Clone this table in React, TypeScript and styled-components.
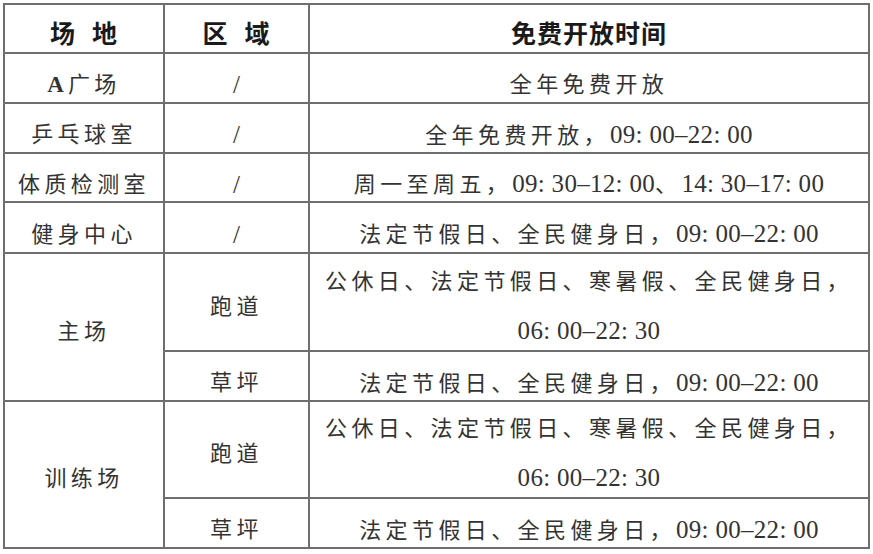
import React from "react";
import styled, { createGlobalStyle } from "styled-components";

const Global = createGlobalStyle`
  html, body {
    margin: 0;
    padding: 0;
    background: #ffffff;
  }
  body {
    font-family: "Liberation Serif", "Noto Sans CJK SC", serif;
  }
`;

const Page = styled.div`
  padding: 3px 0 0 3px;
  background: #ffffff;
`;

const Table = styled.div`
  display: inline-grid;
  grid-template-columns: 158px 143px 558px;
  grid-template-rows: 47px 48px 48px 47px 49px 96px 48px 95px 48px;
  gap: 2px;
  padding: 2px;
  background: #6e6e6e;
`;

const Cell = styled.div<{ $rows?: number }>`
  grid-row: span ${(p) => p.$rows ?? 1};
  background: #ffffff;
  display: flex;
  flex-direction: column;
  align-items: center;
  justify-content: center;
  padding-top: 13px;
  box-sizing: border-box;
  color: #333333;
  font-family: "Liberation Serif", "Noto Sans CJK SC", serif;
  font-size: 22px;
  letter-spacing: 4.4px;
  line-height: 49px;
  white-space: nowrap;
`;

const MultiCell = styled(Cell)`
  padding-top: 8px;
`;

const HeadCell = styled(Cell)`
  padding-top: 8px;
  color: #1a1a1a;
  font-family: "Noto Sans CJK SC", sans-serif;
  font-weight: 700;
  font-size: 25px;
  letter-spacing: 1px;
`;

const Gap = styled.span`
  display: inline-block;
  width: 16px;
`;

const Line = styled.span`
  display: block;
  text-align: center;
`;

const Num = styled.span`
  font-family: "Liberation Serif", serif;
  font-size: 25px;
  letter-spacing: 0.3px;
`;

const Latin = styled.span`
  font-family: "Liberation Serif", serif;
  font-weight: 700;
  font-size: 23px;
  letter-spacing: 4px;
`;

const Slash = styled.span`
  font-family: "Liberation Serif", serif;
  font-size: 25px;
  letter-spacing: 0;
`;

const T = (s: string) => <Num>{s}</Num>;

export default function App() {
  return (
    <>
      <Global />
      <Page>
        <Table>
          <HeadCell>
            <Line>
              场<Gap />地
            </Line>
          </HeadCell>
          <HeadCell>
            <Line>
              区<Gap />域
            </Line>
          </HeadCell>
          <HeadCell>免费开放时间</HeadCell>

          <Cell>
            <Line>
              <Latin>A</Latin>广场
            </Line>
          </Cell>
          <Cell>
            <Slash>/</Slash>
          </Cell>
          <Cell>全年免费开放</Cell>

          <Cell>乒乓球室</Cell>
          <Cell>
            <Slash>/</Slash>
          </Cell>
          <Cell>
            <Line>
              全年免费开放，{T("09: 00–22: 00")}
            </Line>
          </Cell>

          <Cell>体质检测室</Cell>
          <Cell>
            <Slash>/</Slash>
          </Cell>
          <Cell>
            <Line>
              周一至周五，{T("09: 30–12: 00")}、{T("14: 30–17: 00")}
            </Line>
          </Cell>

          <Cell>健身中心</Cell>
          <Cell>
            <Slash>/</Slash>
          </Cell>
          <Cell>
            <Line>
              法定节假日、全民健身日，{T("09: 00–22: 00")}
            </Line>
          </Cell>

          <MultiCell $rows={2}>主场</MultiCell>
          <MultiCell>跑道</MultiCell>
          <MultiCell>
            <Line>公休日、法定节假日、寒暑假、全民健身日，</Line>
            <Line>{T("06: 00–22: 30")}</Line>
          </MultiCell>
          <Cell>草坪</Cell>
          <Cell>
            <Line>
              法定节假日、全民健身日，{T("09: 00–22: 00")}
            </Line>
          </Cell>

          <MultiCell $rows={2}>训练场</MultiCell>
          <MultiCell>跑道</MultiCell>
          <MultiCell>
            <Line>公休日、法定节假日、寒暑假、全民健身日，</Line>
            <Line>{T("06: 00–22: 30")}</Line>
          </MultiCell>
          <Cell>草坪</Cell>
          <Cell>
            <Line>
              法定节假日、全民健身日，{T("09: 00–22: 00")}
            </Line>
          </Cell>
        </Table>
      </Page>
    </>
  );
}
